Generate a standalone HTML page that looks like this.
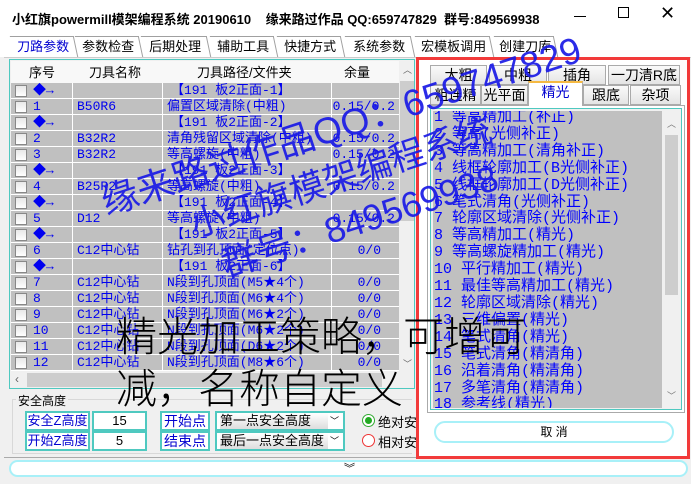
<!DOCTYPE html>
<html><head><meta charset="utf-8"><style>
*{margin:0;padding:0;box-sizing:border-box}
body{width:691px;height:484px;overflow:hidden;background:#f0f0f0;font-family:"Liberation Sans","Noto Sans CJK SC",sans-serif;font-size:12px;position:relative}
.a{position:absolute}
.title{left:0;top:0;width:691px;height:57px;background:#fff}
.tab{position:absolute;top:36px;height:21px;font-size:13px;text-align:center;line-height:20px;color:#000;border-top:1px solid #a0a0a0;border-right:1px solid #a0a0a0;transform:skewX(12deg)}
.tab span{display:inline-block;transform:skewX(-12deg)}
.grid{left:9px;top:59px;width:406px;height:330px;border:1px solid #4fc9c0;background:#f0f0f0}
.row{position:absolute;left:2px;width:388px;height:16px;background:#c0c0c0;border-bottom:1px solid #fff;color:#0000f0;font-family:"Liberation Mono","Noto Sans CJK SC",monospace;font-size:13px;line-height:15px}
.row span{position:absolute;top:0}
.cb{position:absolute;left:4px;top:2px;width:12px;height:12px;border:1px solid #888;background:linear-gradient(#e8e8e8,#fff)}
.vl{position:absolute;top:0;width:1px;height:16px;background:#fff}
.box{position:absolute;border:2px solid #4fc9c0;background:#fff;text-align:center;font-size:13px;line-height:16px;color:#0000d0;white-space:nowrap;overflow:hidden}
.rt{position:absolute;height:20px;border:1px solid #aaa;background:linear-gradient(#fafafa,#e4e4e4);text-align:center;font-size:14px;line-height:19px}
.wm{position:absolute;color:#1a1ae6;white-space:nowrap;transform:rotate(-18deg);transform-origin:0 100%;font-family:"Liberation Sans","Noto Sans CJK SC",sans-serif;opacity:.92}
</style></head><body>
<div class="a title"></div>
<div class="a" style="left:12px;top:9px;font-size:13px;font-weight:bold">小红旗powermill模架编程系统 20190610&nbsp;&nbsp;&nbsp; 缘来路过作品 QQ:659747829&nbsp; 群号:849569938</div>
<div class="a" style="left:574px;top:16px;width:12px;height:1px;background:#000"></div>
<div class="a" style="left:618px;top:7px;width:11px;height:11px;border:1px solid #000"></div>
<div class="a" style="left:660px;top:3px;font-size:18px">✕</div>

<div class="tab" style="left:12px;width:64px;color:#0000d0;background:#fff"><span>刀路参数</span></div>
<div class="tab" style="left:77px;width:64px"><span>参数检查</span></div>
<div class="tab" style="left:143px;width:66px"><span>后期处理</span></div>
<div class="tab" style="left:212px;width:64px"><span>辅助工具</span></div>
<div class="tab" style="left:279px;width:64px"><span>快捷方式</span></div>
<div class="tab" style="left:347px;width:66px"><span>系统参数</span></div>
<div class="tab" style="left:417px;width:75px"><span>宏模板调用</span></div>
<div class="tab" style="left:496px;width:60px"><span>创建刀库</span></div>
<div class="a" style="left:4px;top:57px;width:687px;height:1px;background:#ccc"></div>

<div class="a grid">
<div class="a" style="left:1px;top:1px;width:388px;height:23px;background:#f8f8f8;font-size:13px;line-height:23px">
<span class="a" style="left:18px">序号</span><span class="a" style="left:78px">刀具名称</span><span class="a" style="left:186px">刀具路径/文件夹</span><span class="a" style="left:333px">余量 <span style="font-family:'Liberation Mono';font-size:11px">XY/Z</span></span></div>
<div class="a" style="left:390px;top:1px;width:14px;height:311px;background:#f0f0f0"><div style="position:absolute;top:20px;width:14px;height:140px;background:#cdcdcd"></div><span style="position:absolute;top:2px;left:3px;font-size:9px;color:#666">︿</span><span style="position:absolute;bottom:2px;left:3px;font-size:9px;color:#666">﹀</span></div>
<div class="a" style="left:1px;top:312px;width:389px;height:16px;background:#f0f0f0"><div style="position:absolute;left:16px;top:1px;width:355px;height:14px;background:#cdcdcd"></div><span style="position:absolute;left:4px;top:0;color:#666">‹</span></div>
</div>
<div id="rows"></div>
<div class="a" style="left:12px;top:399px;width:400px;height:55px;border:1px solid #d8d8d8;border-right:none"></div>
<div class="a" style="left:16px;top:392px;font-size:12px;background:#f0f0f0;padding:0 2px">安全高度</div>
<div class="box" style="left:25px;top:411px;width:65px;height:20px">安全Z高度</div>
<div class="box" style="left:92px;top:411px;width:55px;height:20px;color:#000">15</div>
<div class="box" style="left:25px;top:431px;width:65px;height:20px">开始Z高度</div>
<div class="box" style="left:92px;top:431px;width:55px;height:20px;color:#000">5</div>
<div class="box" style="left:160px;top:411px;width:50px;height:20px;font-size:14px">开始点</div>
<div class="box" style="left:160px;top:431px;width:50px;height:20px;font-size:14px">结束点</div>
<div class="box" style="left:215px;top:411px;width:130px;height:20px;color:#000;text-align:left;padding-left:3px"><span style="background:linear-gradient(#fff,#ddd);display:inline-block;width:108px">第一点安全高度</span><span style="position:absolute;right:4px;font-size:9px">﹀</span></div>
<div class="box" style="left:215px;top:431px;width:130px;height:20px;color:#000;text-align:left;padding-left:3px"><span style="background:linear-gradient(#fff,#ddd);display:inline-block;width:108px">最后一点安全高度</span><span style="position:absolute;right:4px;font-size:9px">﹀</span></div>
<div class="a" style="left:362px;top:414px;width:13px;height:13px;border:1px solid #3a3;border-radius:50%;background:#fff"><div style="margin:2px;width:7px;height:7px;border-radius:50%;background:#2a2"></div></div>
<div class="a" style="left:378px;top:412px;font-size:13px">绝对安</div>
<div class="a" style="left:362px;top:434px;width:13px;height:13px;border:1px solid #e33;border-radius:50%;background:#fff"></div>
<div class="a" style="left:378px;top:432px;font-size:13px">相对安</div>
<div class="a" style="left:4px;top:457px;width:685px;height:1px;background:#aaa"></div>
<div class="a" style="left:9px;top:460px;width:679px;height:17px;border:2px solid #a8f0f8;border-radius:9px;background:#fff"></div>
<div class="a" style="left:344px;top:460px;font-size:11px">︾</div>

<div class="a" style="left:416px;top:57px;width:274px;height:402px;border:3px solid #f23a3a;background:#fff"></div>
<div class="a" style="left:427px;top:105px;width:258px;height:308px;border:1px solid #aaa;background:#fff"></div>
<div class="rt" style="left:430px;top:65px;width:57px">大粗</div>
<div class="rt" style="left:489px;top:65px;width:58px">中粗</div>
<div class="rt" style="left:548px;top:65px;width:58px">插角</div>
<div class="rt" style="left:608px;top:65px;width:72px">一刀清R底</div>
<div class="rt" style="left:430px;top:85px;width:51px">粗连精</div>
<div class="rt" style="left:481px;top:85px;width:47px">光平面</div>
<div class="rt" style="left:528px;top:81px;width:55px;height:25px;background:#fff;border-top:2px solid #f5b942;border-bottom:none;color:#0000d0">精光</div>
<div class="rt" style="left:583px;top:85px;width:46px">跟底</div>
<div class="rt" style="left:630px;top:85px;width:51px">杂项</div>
<div class="a" style="left:430px;top:108px;width:252px;height:302px;border:1px solid #4fc9c0;background:#f0f0f0"></div>
<div class="a" style="left:433px;top:111px;width:229px;height:297px;background:#c0c0c0"></div>
<div class="a" style="left:664px;top:111px;width:15px;height:297px;background:#f0f0f0"><span style="position:absolute;left:3px;top:6px;font-size:9px;color:#777">︿</span><span style="position:absolute;left:3px;bottom:6px;font-size:9px;color:#777">﹀</span><div style="position:absolute;left:1px;top:24px;width:13px;height:160px;background:#cdcdcd"></div></div>
<div class="a" style="left:433px;top:111px;width:229px;height:297px;overflow:hidden">
<div style="position:relative;left:1px;top:-1px;color:#0000ff;font-size:15px;line-height:16.9px;font-family:'Liberation Mono','Noto Sans CJK SC',monospace;white-space:nowrap">
1 等高精加工(补正)<br>2 等高(光侧补正)<br>3 等高精加工(清角补正)<br>4 线框轮廓加工(B光侧补正)<br>5 线框轮廓加工(D光侧补正)<br>6 笔式清角(光侧补正)<br>7 轮廓区域清除(光侧补正)<br>8 等高精加工(精光)<br>9 等高螺旋精加工(精光)<br>10 平行精加工(精光)<br>11 最佳等高精加工(精光)<br>12 轮廓区域清除(精光)<br>13 三维偏置(精光)<br>14 笔式清角(精光)<br>15 笔式清角(精清角)<br>16 沿着清角(精清角)<br>17 多笔清角(精清角)<br>18 参考线(精光)</div></div>
<div class="a" style="left:434px;top:421px;width:240px;height:22px;border:2px solid #a8f0f8;border-radius:11px;background:#fff;text-align:center;line-height:18px;font-size:12px">取 消</div>

<div class="wm" style="left:110px;top:172px;font-size:37px">缘来路过作品QQ：659747829</div>
<div class="wm" style="left:198px;top:197px;font-size:35px">小红旗模架编程系统</div>
<div class="wm" style="left:230px;top:236px;font-size:36px">群号：849569938</div>
<div class="a" style="left:116px;top:307px;font-size:41px;line-height:52px;color:#000;white-space:nowrap;font-family:'Noto Sans CJK SC',sans-serif;font-weight:300">精光加工策略，可增可<br>减，名称自定义</div>

<script>
var d=[["◆→","","【191 板2正面-1】",""],["1","B50R6","偏置区域清除(中粗)","0.15/0.2"],["◆→","","【191 板2正面-2】",""],["2","B32R2","清角残留区域清除(中粗)","0.15/0.2"],["3","B32R2","等高螺旋(中粗)","0.15/0.2"],["◆→","","【191 板2正面-3】",""],["4","B25R2","等高螺旋(中粗)","0.15/0.2"],["◆→","","【191 板2正面-4】",""],["5","D12","等高螺旋(中粗)","0.15/0.2"],["◆→","","【191 板2正面-5】",""],["6","C12中心钻","钻孔到孔顶面(定位点)","0/0"],["◆→","","【191 板2正面-6】",""],["7","C12中心钻","N段到孔顶面(M5★4个)","0/0"],["8","C12中心钻","N段到孔顶面(M6★4个)","0/0"],["9","C12中心钻","N段到孔顶面(M6★2个)","0/0"],["10","C12中心钻","N段到孔顶面(M6★2个)","0/0"],["11","C12中心钻","N段到孔顶面(D6★2个)","0/0"],["12","C12中心钻","N段到孔顶面(M8★6个)","0/0"]];
var h="";d.forEach(function(r,i){var g=r[0]=="◆→";h+='<div class="row" style="left:11px;top:'+(83+i*16)+'px"><div class="cb"></div><span style="left:22px;'+(g?'font-size:13px':'')+'">'+r[0]+'</span><div class="vl" style="left:61px"></div><span style="left:66px">'+r[1]+'</span><div class="vl" style="left:151px"></div><span style="left:'+(g?160:156)+'px">'+r[2]+'</span><div class="vl" style="left:320px"></div><span style="right:4px;'+(r[3]=="0/0"?'right:18px':'')+'">'+r[3]+'</span></div>'});
document.getElementById("rows").innerHTML=h;
</script>
</body></html>
